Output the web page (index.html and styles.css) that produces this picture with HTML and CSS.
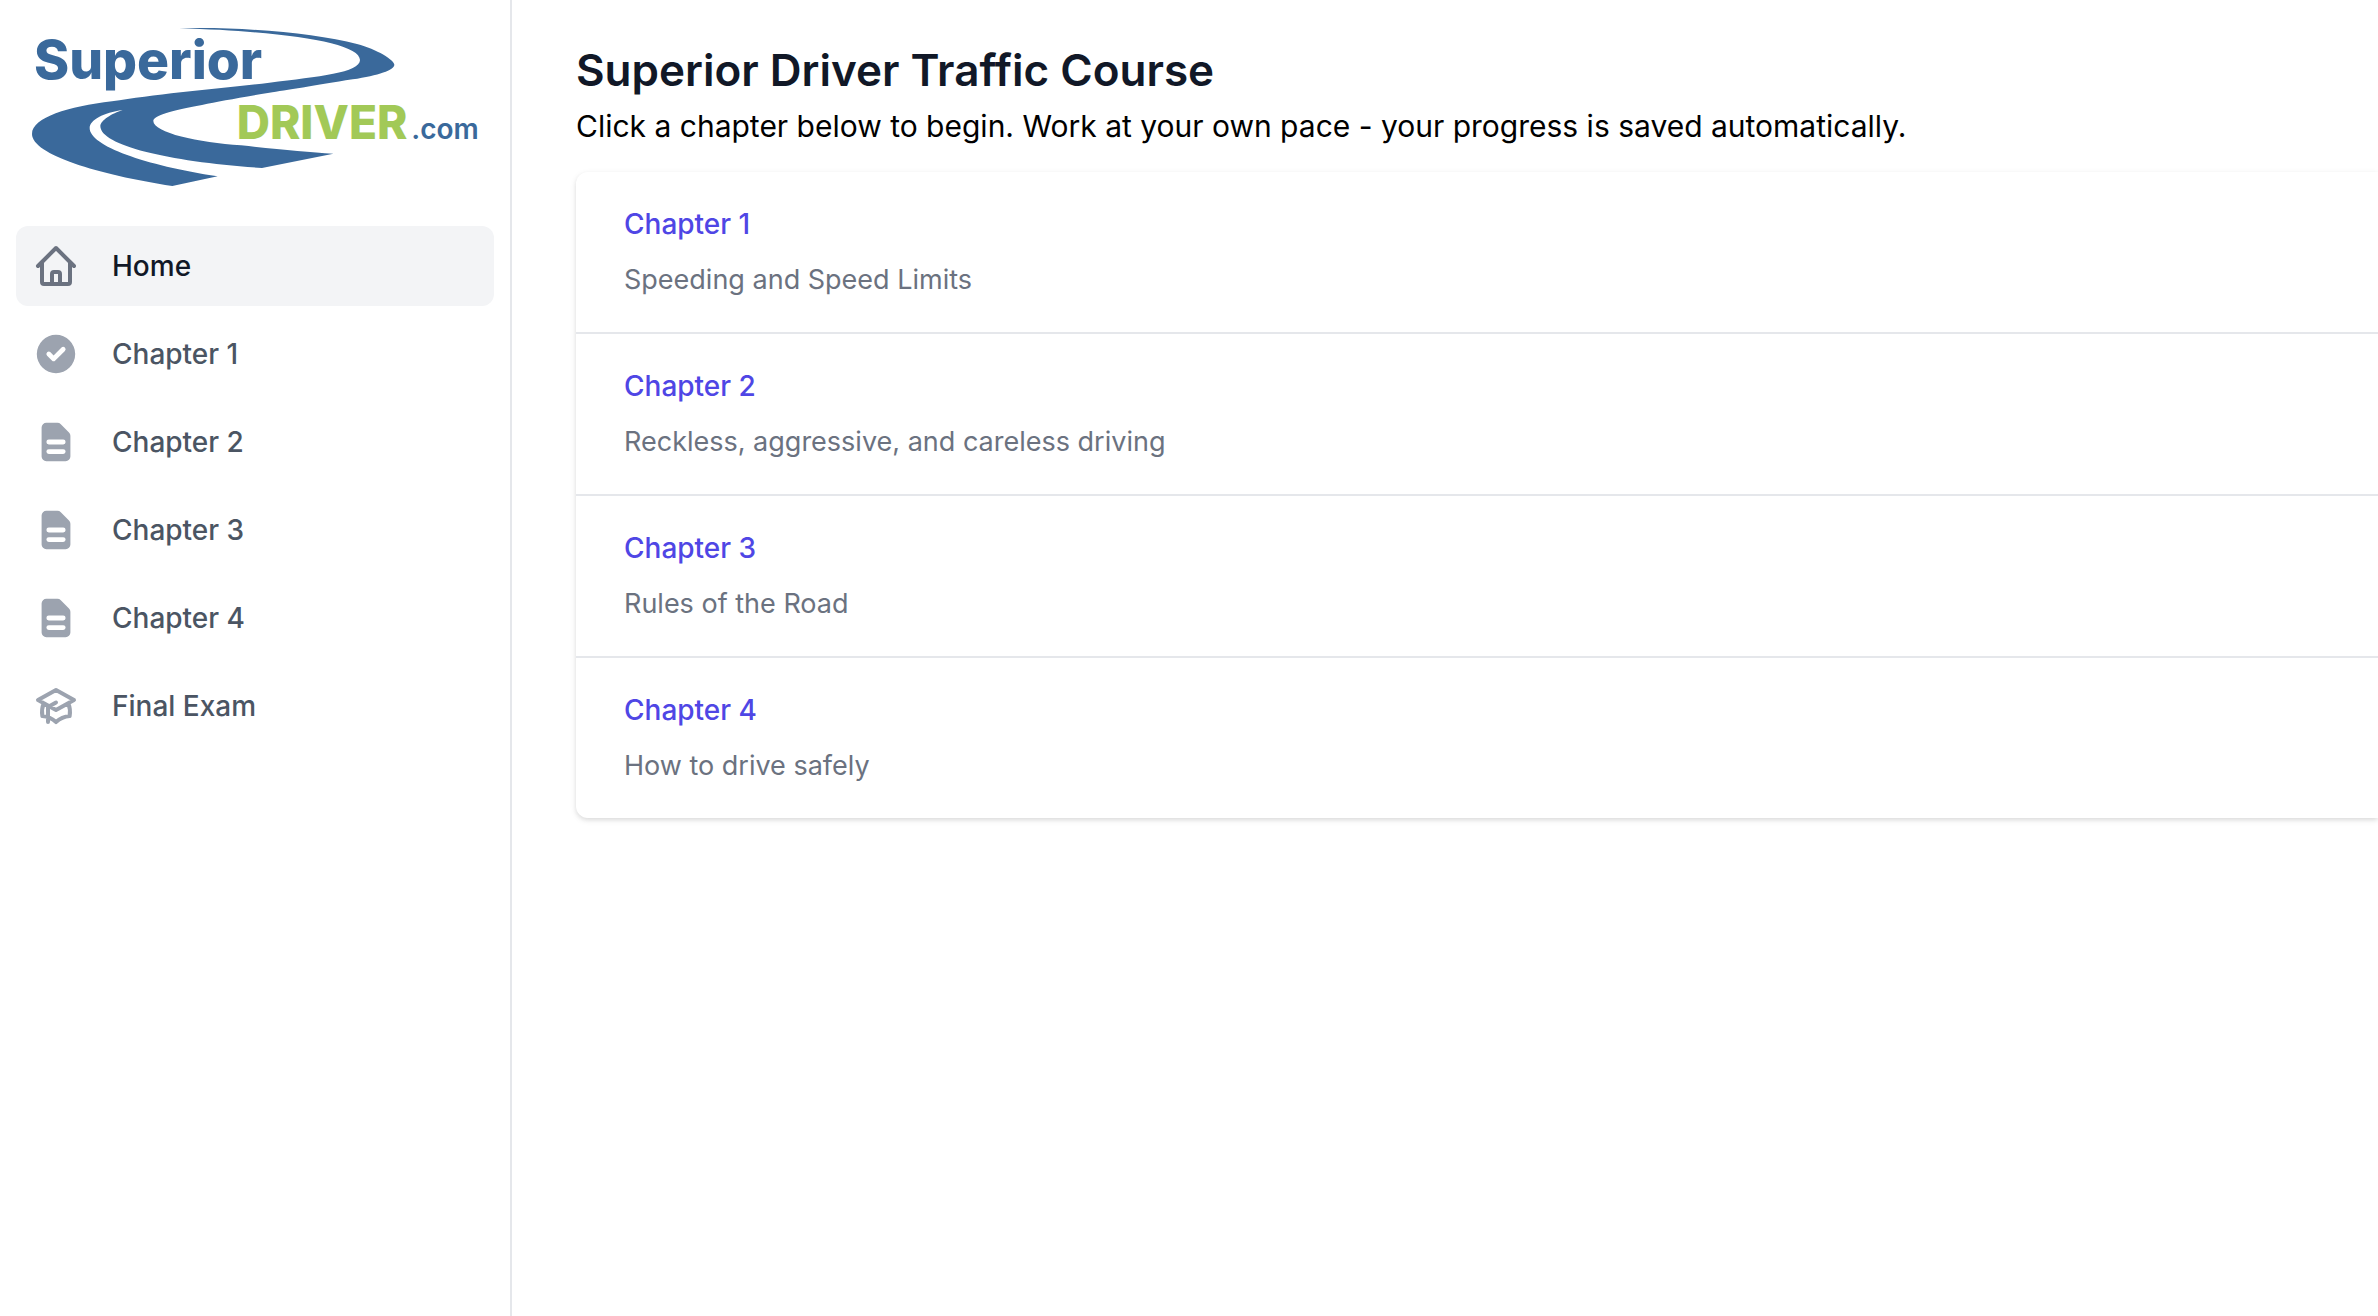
FILE: index.html
```
<!DOCTYPE html>
<html lang="en">
<head>
    <meta charset="UTF-8">
    <meta name="viewport" content="width=device-width, initial-scale=1.0">
    <title>Superior Driver Traffic Course</title>
    <link rel="stylesheet" href="styles.css">
</head>
<body>
    <aside class="sidebar">
        <a href="#" class="logo" aria-label="Superior Driver home">
            <svg viewBox="0 0 1350 504">
                <!-- Road -->
                <path class="logo-road" d="M442 13C640 8 850 28 975 60C1035 76 1087 108 1087 122C1087 138 1040 154 962 166C850 184 760 200 712 206C620 222 560 232 510 243C420 258 364 276 364 291C364 326 500 356 627 364C740 376 830 384 904 389L690 432C420 414 205 366 205 306C205 290 240 268 272 258C215 266 173 288 173 312C173 366 340 424 557 457L421 486C200 452 0 392 0 330C0 280 110 248 240 232C370 210 560 194 712 176C860 158 984 146 984 108C984 56 760 22 442 13Z"/>
                <text class="logo-superior" x="6" y="166">Superior</text>
                <text class="logo-driver" x="614" y="344">DRIVER</text>
                <text class="logo-com" x="1138" y="344">.com</text>
            </svg>
        </a>
        <nav class="nav">
            <a href="#" class="nav-item active">
                <svg class="nav-icon outline" viewBox="0 0 24 24"><path d="M3 12l2-2m0 0l7-7 7 7M5 10v10a1 1 0 001 1h3m10-11l2 2m-2-2v10a1 1 0 01-1 1h-3m-6 0a1 1 0 001-1v-4a1 1 0 011-1h2a1 1 0 011 1v4a1 1 0 001 1m-6 0h6"/></svg>
                Home
            </a>
            <a href="#" class="nav-item">
                <svg class="nav-icon" viewBox="0 0 20 20"><path fill-rule="evenodd" d="M10 18a8 8 0 100-16 8 8 0 000 16zm3.707-9.293a1 1 0 00-1.414-1.414L9 10.586 7.707 9.293a1 1 0 00-1.414 1.414l2 2a1 1 0 001.414 0l4-4z"/></svg>
                Chapter 1
            </a>
            <a href="#" class="nav-item">
                <svg class="nav-icon" viewBox="0 0 20 20"><path fill-rule="evenodd" d="M4 4a2 2 0 012-2h4.586A2 2 0 0112 2.586L15.414 6A2 2 0 0116 7.414V16a2 2 0 01-2 2H6a2 2 0 01-2-2V4zm2 6a1 1 0 011-1h6a1 1 0 110 2H7a1 1 0 01-1-1zm1 3a1 1 0 100 2h6a1 1 0 100-2H7z"/></svg>
                Chapter 2
            </a>
            <a href="#" class="nav-item">
                <svg class="nav-icon" viewBox="0 0 20 20"><path fill-rule="evenodd" d="M4 4a2 2 0 012-2h4.586A2 2 0 0112 2.586L15.414 6A2 2 0 0116 7.414V16a2 2 0 01-2 2H6a2 2 0 01-2-2V4zm2 6a1 1 0 011-1h6a1 1 0 110 2H7a1 1 0 01-1-1zm1 3a1 1 0 100 2h6a1 1 0 100-2H7z"/></svg>
                Chapter 3
            </a>
            <a href="#" class="nav-item">
                <svg class="nav-icon" viewBox="0 0 20 20"><path fill-rule="evenodd" d="M4 4a2 2 0 012-2h4.586A2 2 0 0112 2.586L15.414 6A2 2 0 0116 7.414V16a2 2 0 01-2 2H6a2 2 0 01-2-2V4zm2 6a1 1 0 011-1h6a1 1 0 110 2H7a1 1 0 01-1-1zm1 3a1 1 0 100 2h6a1 1 0 100-2H7z"/></svg>
                Chapter 4
            </a>
            <a href="#" class="nav-item">
                <svg class="nav-icon outline" viewBox="0 0 24 24"><path d="M12 14l9-5-9-5-9 5 9 5zm0 0l6.16-3.422a12.083 12.083 0 01.665 6.479A11.952 11.952 0 0012 20.055a11.952 11.952 0 00-6.824-2.998 12.078 12.078 0 01.665-6.479L12 14zm-4 6v-7.5l4-2.222"/></svg>
                Final Exam
            </a>
        </nav>
    </aside>
    <main class="main-content">
        <h1>Superior Driver Traffic Course</h1>
        <p class="intro">Click a chapter below to begin. Work at your own pace - your progress is saved automatically.</p>
        <ul class="chapters">
            <li>
                <a href="#">Chapter 1</a>
                <p>Speeding and Speed Limits</p>
            </li>
            <li>
                <a href="#">Chapter 2</a>
                <p>Reckless, aggressive, and careless driving</p>
            </li>
            <li>
                <a href="#">Chapter 3</a>
                <p>Rules of the Road</p>
            </li>
            <li>
                <a href="#">Chapter 4</a>
                <p>How to drive safely</p>
            </li>
        </ul>
    </main>
</body>
</html>
```

FILE: styles.css
```
:root {
    --logo-blue: #3a699b;
    --logo-green: #a2c957;
    --link-color: #4f46e5;
    --heading-color: #111827;
    --border-color: #e5e7eb;
}

* {
    box-sizing: border-box;
}

body {
    font-family: 'Inter', sans-serif;
    margin: 0;
    display: flex;
    min-height: 100vh;
    background-color: white;
    color: black;
}

.sidebar {
    width: 512px;
    flex-shrink: 0;
    border-right: 2px solid var(--border-color);
}

.logo {
    display: block;
    padding: 24px 28px 24px 32px;
}

.logo svg {
    display: block;
    width: 100%;
}

.logo-road,
.logo-superior,
.logo-com {
    fill: var(--logo-blue);
}

.logo-superior {
    font-size: 160px;
    font-weight: 800;
}

.logo-driver {
    fill: var(--logo-green);
    font-size: 138px;
    font-weight: 800;
}

.logo-com {
    font-size: 84px;
    font-weight: 600;
}

.nav {
    display: flex;
    flex-direction: column;
    gap: 8px;
    padding: 10px 16px;
}

.nav-item {
    display: flex;
    align-items: center;
    gap: 32px;
    padding: 16px;
    border-radius: 12px;
    color: #4b5563;
    font-size: 28px;
    font-weight: 500;
    line-height: 40px;
    text-decoration: none;
}

.nav-item:hover,
.nav-item.active {
    background-color: #f3f4f6;
    color: var(--heading-color);
}

.nav-icon {
    width: 48px;
    height: 48px;
    fill: #9ca3af;
}

.nav-icon.outline {
    fill: none;
    stroke: #9ca3af;
    stroke-width: 2;
    stroke-linecap: round;
    stroke-linejoin: round;
}

.nav-item.active .nav-icon {
    stroke: #6b7280;
}

.main-content {
    flex-grow: 1;
    padding: 38px 0 36px 64px;
}

h1 {
    margin: 0;
    color: var(--heading-color);
    font-size: 44px;
    font-weight: 600;
    line-height: 64px;
}

.intro {
    margin: 0 0 22px;
    font-size: 30px;
    line-height: 48px;
}

/* The list runs off the right edge, so only its left corners are rounded */
.chapters {
    list-style: none;
    margin: 0;
    padding: 0;
    border-radius: 12px 0 0 12px;
    box-shadow: 0 2px 6px rgba(0,0,0,0.1), 0 2px 4px rgba(0,0,0,0.06);
}

.chapters li {
    padding: 32px 48px;
    font-size: 28px;
    line-height: 40px;
}

.chapters li + li {
    border-top: 2px solid var(--border-color);
}

.chapters a {
    display: block;
    color: var(--link-color);
    font-weight: 500;
    text-decoration: none;
}

.chapters p {
    margin: 16px 0 0;
    color: #6b7280;
    font-size: 27px;
}
```
